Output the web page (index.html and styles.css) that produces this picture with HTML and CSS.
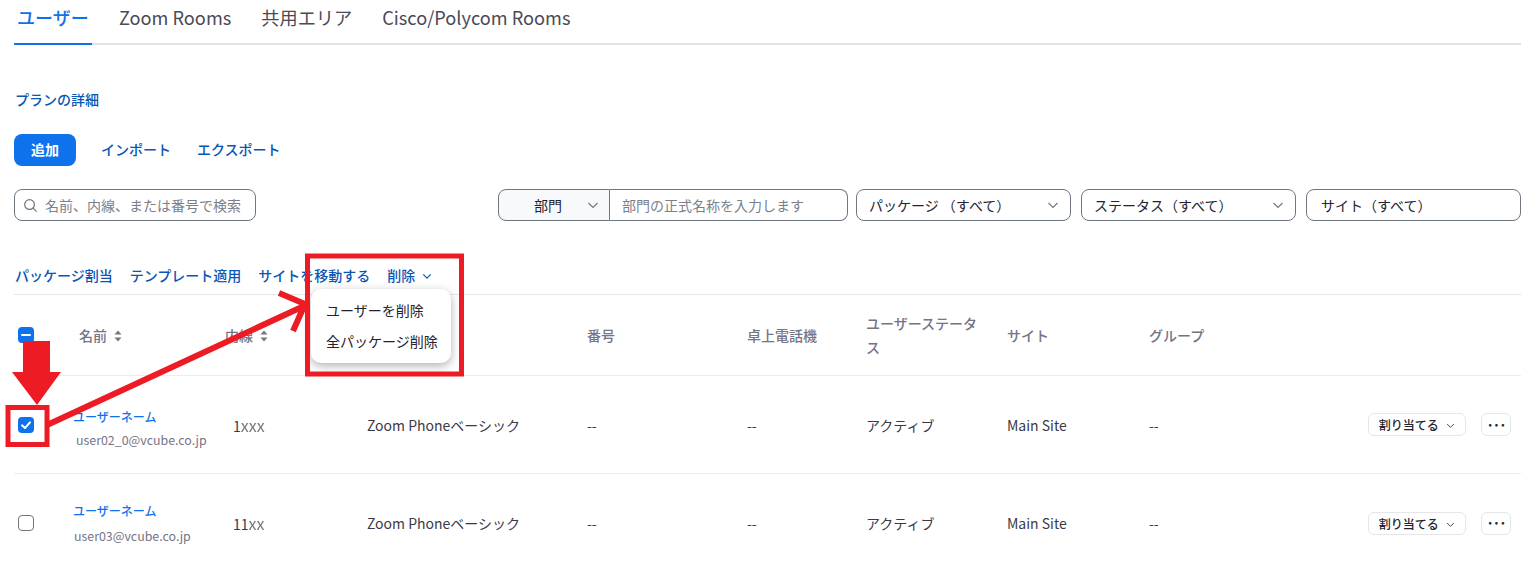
FILE: index.html
```html
<!DOCTYPE html>
<html lang="ja">
<head>
    <meta charset="UTF-8">
    <meta name="viewport" content="width=device-width, initial-scale=1.0">
    <title>ユーザー</title>
    <link rel="stylesheet" href="styles.css">
</head>
<body>
    <div class="page">
        <div class="tabs">
            <a class="tab active">ユーザー</a>
            <a class="tab">Zoom Rooms</a>
            <a class="tab">共用エリア</a>
            <a class="tab">Cisco/Polycom Rooms</a>
        </div>

        <div class="plan"><a class="link">プランの詳細</a></div>

        <div class="toolbar">
            <button class="add">追加</button>
            <a class="link">インポート</a>
            <a class="link">エクスポート</a>
        </div>

        <div class="filters">
            <div class="field search">
                <svg class="search-icon" viewBox="0 0 16 16"><circle cx="7" cy="7" r="5.2"/><path d="M10.8 10.8 L14.5 14.5"/></svg>
                <span class="placeholder">名前、内線、または番号で検索</span>
            </div>
            <div class="dept">
                <div class="dept-select">
                    <span>部門</span>
                    <svg class="chev" viewBox="0 0 12 12"><path d="M1.5 4 L6 8.5 L10.5 4"/></svg>
                </div>
                <div class="dept-input placeholder">部門の正式名称を入力します</div>
            </div>
            <div class="field select">
                <span>パッケージ （すべて）</span>
                <svg class="chev" viewBox="0 0 12 12"><path d="M1.5 4 L6 8.5 L10.5 4"/></svg>
            </div>
            <div class="field select">
                <span>ステータス（すべて）</span>
                <svg class="chev" viewBox="0 0 12 12"><path d="M1.5 4 L6 8.5 L10.5 4"/></svg>
            </div>
            <div class="field select site">
                <span>サイト（すべて）</span>
            </div>
        </div>

        <div class="actions">
            <a class="link">パッケージ割当</a>
            <a class="link">テンプレート適用</a>
            <a class="link">サイトを移動する</a>
            <a class="link">削除
                <svg class="chev small" viewBox="0 0 12 12"><path d="M1.5 4 L6 8.5 L10.5 4"/></svg>
            </a>
        </div>

        <div class="row head">
            <div><span class="check mixed"><svg viewBox="0 0 16 16"><path d="M4 8 H12"/></svg></span></div>
            <div>名前 <svg class="sort" viewBox="0 0 8 12"><path d="M4 0.5 L7.5 4.5 H0.5 Z M4 11.5 L7.5 7.5 H0.5 Z"/></svg></div>
            <div>内線 <svg class="sort" viewBox="0 0 8 12"><path d="M4 0.5 L7.5 4.5 H0.5 Z M4 11.5 L7.5 7.5 H0.5 Z"/></svg></div>
            <div></div>
            <div>番号</div>
            <div>卓上電話機</div>
            <div class="status-head">ユーザーステータス</div>
            <div>サイト</div>
            <div>グループ</div>
        </div>

        <div class="row">
            <div><span class="check on"><svg viewBox="0 0 16 16"><path d="M4 8.3 L7 11 L12 5.3"/></svg></span></div>
            <div class="user first">
                <a class="user-name">ユーザーネーム</a>
                <div class="email">user02_0@vcube.co.jp</div>
            </div>
            <div class="ext">1<span class="blur">xxx</span></div>
            <div class="pkg">Zoom Phoneベーシック</div>
            <div>--</div>
            <div>--</div>
            <div>アクティブ</div>
            <div>Main Site</div>
            <div class="last">
                <span>--</span>
                <div class="row-btns">
                    <button class="assign">割り当てる <svg class="chev tiny" viewBox="0 0 12 12"><path d="M1.5 4 L6 8.5 L10.5 4"/></svg></button>
                    <button class="more">···</button>
                </div>
            </div>
        </div>

        <div class="row no-line">
            <div><span class="check"></span></div>
            <div class="user second">
                <a class="user-name">ユーザーネーム</a>
                <div class="email">user03@vcube.co.jp</div>
            </div>
            <div class="ext">11<span class="blur">xx</span></div>
            <div class="pkg">Zoom Phoneベーシック</div>
            <div>--</div>
            <div>--</div>
            <div>アクティブ</div>
            <div>Main Site</div>
            <div class="last">
                <span>--</span>
                <div class="row-btns">
                    <button class="assign">割り当てる <svg class="chev tiny" viewBox="0 0 12 12"><path d="M1.5 4 L6 8.5 L10.5 4"/></svg></button>
                    <button class="more">···</button>
                </div>
            </div>
        </div>
    </div>

    <!-- dropdown opened from 削除 -->
    <div class="menu">
        <div class="menu-item">ユーザーを削除</div>
        <div class="menu-item">全パッケージ削除</div>
    </div>

    <!-- red annotations drawn on top of the screenshot -->
    <svg class="marks" viewBox="0 0 1537 564">
        <rect class="mark-box" x="307.5" y="256" width="154" height="118"/>
        <rect class="mark-box" x="8" y="407.5" width="39" height="37"/>
        <path class="mark-fill" d="M23 341 H50 V372 H61 L37 405 L12 372 H23 Z"/>
        <path class="mark-line" d="M47 425 L304 306 M279 293 L305 304 L293 331"/>
    </svg>
</body>
</html>
```

FILE: styles.css
```css
* {
    box-sizing: border-box;
}

html, body {
    margin: 0;
    height: 100%;
    overflow: hidden;
}

body {
    position: relative;
    background-color: #fff;
    color: #23232f;
    font-family: "Noto Sans CJK JP", "Noto Sans", sans-serif;
    font-size: 14px;
}

.page {
    padding: 0 16px 0 14px;
}

.link {
    color: #0956b5;
    font-weight: 500;
    font-size: 14px;
    white-space: nowrap;
}

/* Tabs */
.tabs {
    display: flex;
    height: 45px;
    border-bottom: 2px solid #dfe3e8;
}

.tab {
    margin-right: 30px;
    height: 45px;
    padding: 4px 0 0;
    font-size: 18.2px;
    line-height: 26px;
    color: #4a4a56;
    white-space: nowrap;
}

.tab.active {
    width: 78px;
    padding: 4px 3px 0;
    margin-right: 27px;
    font-size: 18px;
    color: #0e72ed;
    font-weight: 500;
    border-bottom: 2px solid #0e72ed;
}

.plan {
    margin-top: 44px;
    height: 20px;
    line-height: 20px;
    padding-left: 1px;
}

/* Add / import / export */
.toolbar {
    display: flex;
    align-items: center;
    gap: 26px;
    margin-top: 25px;
    height: 32px;
}

.toolbar .link {
    margin-top: -2px;
}

.add {
    width: 62px;
    height: 32px;
    margin-right: -1px;
    padding: 0 0 2px;
    border: none;
    border-radius: 8px;
    background-color: #0e72ed;
    color: #fff;
    font: 700 14px "Noto Sans CJK JP", sans-serif;
}

/* Filters */
.filters {
    display: flex;
    margin-top: 23px;
    height: 32px;
    line-height: 28px;
}

.field {
    display: flex;
    align-items: center;
    height: 32px;
    border: 1px solid #6e7680;
    border-radius: 8px;
    background-color: #fff;
}

.placeholder {
    color: #7b7f8c;
}

.search {
    width: 242px;
    padding: 0 8px;
    gap: 7px;
    margin-right: auto;
}

.search-icon {
    width: 15px;
    height: 15px;
    fill: none;
    stroke: #6e7680;
    stroke-width: 1.3;
    flex: none;
}

.dept {
    display: flex;
    width: 350px;
    height: 32px;
    margin-right: 8px;
}

.dept-select {
    display: flex;
    align-items: center;
    justify-content: space-between;
    width: 112px;
    padding: 0 10px 0 35px;
    border: 1px solid #6e7680;
    border-radius: 8px 0 0 8px;
    background-color: #f7f9fa;
}

.dept-input {
    flex: 1;
    display: flex;
    align-items: center;
    padding-left: 12px;
    border: 1px solid #6e7680;
    border-left: none;
    border-radius: 0 8px 8px 0;
}

.select {
    width: 215px;
    padding: 0 11px 0 12px;
    margin-right: 10px;
    justify-content: space-between;
}

.select.site {
    margin-right: 0;
    padding-left: 14px;
}

.chev {
    width: 12px;
    height: 12px;
    fill: none;
    stroke: #6e7680;
    stroke-width: 1.1;
    flex: none;
}

.chev.small {
    width: 10px;
    height: 10px;
    margin-left: 4px;
    stroke: #0956b5;
    stroke-width: 1.4;
}

.chev.tiny {
    width: 9px;
    height: 9px;
    margin-left: 5px;
    stroke: #23232f;
}

/* Bulk actions */
.actions {
    display: flex;
    align-items: center;
    gap: 17px;
    margin-top: 34px;
    height: 40px;
    padding-left: 1px;
    border-bottom: 1px solid #e4e6ee;
}

/* Table rows */
.row {
    display: grid;
    grid-template-columns: 65px 146px 142px 220px 160px 119px 141px 142px 1fr;
    align-items: center;
    height: 98px;
    border-bottom: 1px solid #ebedf0;
    color: #3a3a46;
}

.row.head {
    height: 81px;
    color: #747487;
    font-weight: 500;
}

.row.no-line {
    border-bottom: none;
}

.status-head {
    width: 114px;
    line-height: 24px;
}

.sort {
    width: 8px;
    height: 12px;
    margin-left: 4px;
    fill: #747487;
    vertical-align: -1px;
}

.check {
    display: block;
    width: 16px;
    height: 16px;
    margin-left: 4px;
    border: 1px solid #6e7680;
    border-radius: 4px;
    background-color: #fff;
}

.check.on, .check.mixed {
    border: none;
    background-color: #0e72ed;
}

.check svg {
    display: block;
    fill: none;
    stroke: #fff;
    stroke-width: 2;
    stroke-linecap: round;
    stroke-linejoin: round;
}

.user {
    margin-left: -6px;
}

.user-name {
    display: block;
    color: #0e72ed;
    font-size: 12px;
    font-weight: 500;
    line-height: 18px;
}

.email {
    color: #747487;
    font-size: 12.4px;
    line-height: 17px;
}

.user.first {
    margin-top: 8px;
}

.user.first .email {
    margin-top: 6px;
    padding-left: 3px;
}

.user.second {
    margin-top: 1px;
}

.user.second .email {
    margin-top: 8px;
    padding-left: 1px;
}

.ext {
    padding-left: 8px;
}

.blur {
    color: #777;
    font-size: 16px;
    filter: blur(0.5px);
}

.last {
    display: flex;
    align-items: center;
    justify-content: space-between;
}

.row-btns {
    display: flex;
    gap: 15px;
    padding-right: 10px;
}

.assign, .more {
    height: 23px;
    border: 1px solid #e4e6ea;
    border-radius: 6px;
    background-color: #fff;
    color: #23232f;
    font: 500 12px "Noto Sans CJK JP", sans-serif;
    padding: 0;
}

.assign {
    width: 98px;
}

.more {
    width: 30px;
    font-weight: 900;
    letter-spacing: -1px;
    line-height: 18px;
}

/* Dropdown over the table */
.menu {
    position: absolute;
    left: 311px;
    top: 289px;
    width: 140px;
    height: 74px;
    padding: 6px 0;
    border-radius: 10px;
    background-color: #fff;
    box-shadow: 0 3px 10px rgba(35, 35, 47, 0.35);
    font-size: 14px;
    color: #23232f;
}

.menu-item {
    height: 31px;
    line-height: 31px;
    padding-left: 15px;
    white-space: nowrap;
}

/* Red markup */
.marks {
    position: absolute;
    left: 0;
    top: 0;
    width: 1537px;
    height: 564px;
    pointer-events: none;
}

.mark-box {
    fill: none;
    stroke: #ed1c24;
    stroke-width: 5;
}

.mark-fill {
    fill: #ed1c24;
}

.mark-line {
    fill: none;
    stroke: #ed1c24;
    stroke-width: 6;
}
```
